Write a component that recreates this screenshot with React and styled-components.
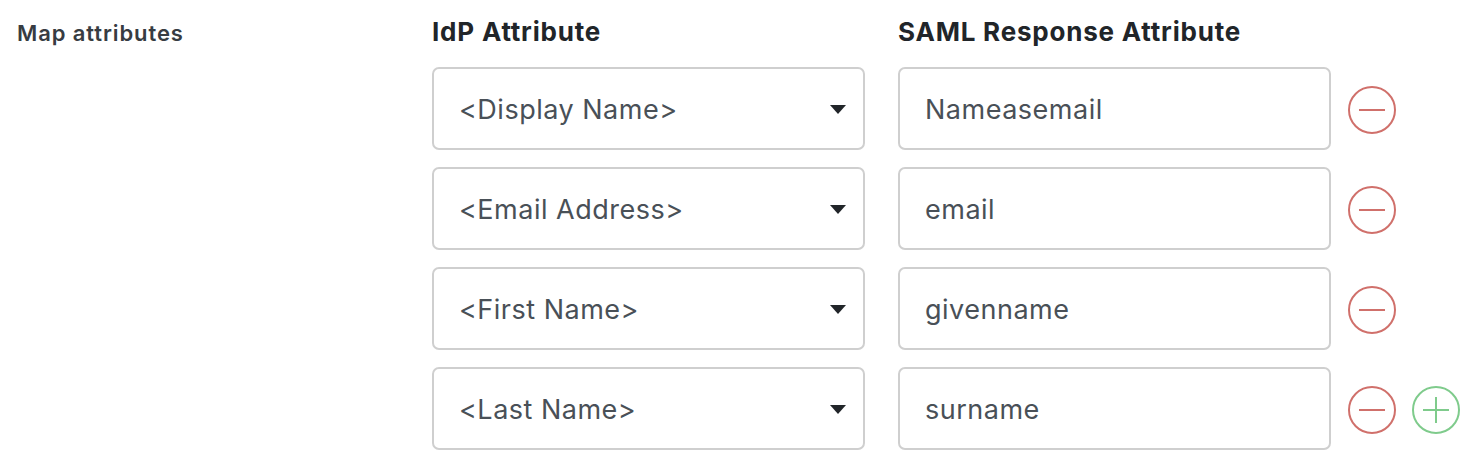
import React from 'react';
import styled, { createGlobalStyle } from 'styled-components';

const GlobalStyle = createGlobalStyle`
    body {
        margin: 0;
        background: #ffffff;
        font-family: Inter, "Noto Sans", "Liberation Sans", sans-serif;
    }
`

const Page = styled.div`
    display: flex;
    align-items: flex-start;
    padding: 16px 0 0 17px;
`

const Label = styled.div`
    width: 415px;
    flex-shrink: 0;
    margin-top: 4px;
    font-size: 22px;
    line-height: 26px;
    font-weight: 600;
    letter-spacing: 0.9px;
    color: #373c42;
`

const Mapping = styled.div`
    display: flex;
    flex-direction: column;
    gap: 17px;
`

const Row = styled.div`
    display: flex;
    align-items: center;
`

const Heading = styled.div`
    width: 433px;
    margin-right: 33px;
    font-size: 26px;
    line-height: 30px;
    font-weight: 700;
    letter-spacing: 0.8px;
    color: #212529;
`

const HeaderRow = styled(Row)`
    margin-top: 1px;
    margin-bottom: 3px;
`

const SelectBox = styled.div`
    box-sizing: border-box;
    width: 433px;
    height: 83px;
    margin-right: 33px;
    display: flex;
    align-items: center;
    justify-content: space-between;
    padding: 2px 17px 0 25px;
    border: 2px solid #cfcfcf;
    border-radius: 7px;
    font-size: 27px;
    letter-spacing: 0.5px;
    color: #495057;
    cursor: pointer;
`

const TextInput = styled.input`
    box-sizing: border-box;
    width: 433px;
    height: 83px;
    padding: 2px 25px 0;
    border: 2px solid #cfcfcf;
    border-radius: 7px;
    font-family: inherit;
    font-size: 27px;
    letter-spacing: 0.5px;
    color: #495057;
    outline: none;
`

const Actions = styled.div`
    display: flex;
    gap: 16px;
    margin-left: 17px;
    padding-top: 2px;
`

const IconButton = styled.button`
    width: 48px;
    height: 48px;
    padding: 0;
    border: none;
    background: none;
    cursor: pointer;
    color: ${p => p.$add ? '#7fcb8c' : '#d0706b'};
    svg { display: block; }
`

const Caret = () => (
    <svg width="16" height="9" viewBox="0 0 16 9">
        <path d="M0 0 H16 L8 9 Z" fill="#212529" />
    </svg>
)

const CircleIcon = ({ add }) => (
    <svg width="48" height="48" viewBox="0 0 48 48" fill="none" stroke="currentColor" strokeWidth="2">
        <circle cx="24" cy="24" r="23" />
        <line x1="11" y1="24" x2="37" y2="24" />
        {add && <line x1="24" y1="11" x2="24" y2="37" />}
    </svg>
)

const rows = [
    { idp: '<Display Name>', saml: 'Nameasemail' },
    { idp: '<Email Address>', saml: 'email' },
    { idp: '<First Name>', saml: 'givenname' },
    { idp: '<Last Name>', saml: 'surname' },
]

const App = () => {
    return (
        <>
            <GlobalStyle />
            <Page>
                <Label>Map attributes</Label>
                <Mapping>
                    <HeaderRow>
                        <Heading>IdP Attribute</Heading>
                        <Heading>SAML Response Attribute</Heading>
                    </HeaderRow>
                    {rows.map((row, i) => (
                        <Row key={row.idp}>
                            <SelectBox>
                                <span>{row.idp}</span>
                                <Caret />
                            </SelectBox>
                            <TextInput defaultValue={row.saml} />
                            <Actions>
                                <IconButton aria-label="Remove"><CircleIcon /></IconButton>
                                {i === rows.length - 1 && (
                                    <IconButton $add aria-label="Add"><CircleIcon add /></IconButton>
                                )}
                            </Actions>
                        </Row>
                    ))}
                </Mapping>
            </Page>
        </>
    );
};
export default App
